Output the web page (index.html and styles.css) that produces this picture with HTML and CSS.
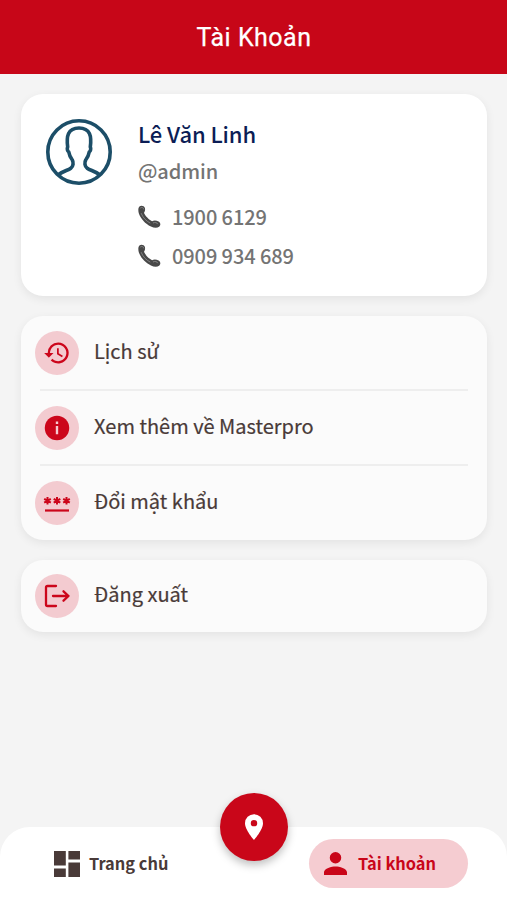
FILE: index.html
```html
<!DOCTYPE html>
<html lang="vi">
<head>
<meta charset="utf-8">
<meta name="viewport" content="width=device-width">
<title>Tài Khoản</title>
<link rel="stylesheet" href="styles.css">
</head>
<body>
<svg class="defs" aria-hidden="true">
  <symbol id="phone" viewBox="0 0 24 24">
    <path fill="#484848" d="M1.500 1.500C3.300 0 6.500.8 7.200 3.200c.5 1.900-.1 3.600-1 4.900 1.300 3.300 5.200 7.300 8.500 8.800 1.800-1 4.500-.9 6.800.3 2.300 1.400 2.300 4.200.5 5.600-1.900 1.400-5.400 1.300-8.500-.3C7.500 19.700 3.100 14.600 1 9.200.1 6.400 0 3 1.500 1.500z"/>
    <path fill="none" stroke="#858585" stroke-width="1" stroke-linecap="round" d="M2.700 3c1.300-1 3-.3 3.300 1.200M3.400 8.900c1.700 4.200 4.800 7.600 9 9.800M16 18.600c1.700-.9 4-.3 4.500 1"/>
  </symbol>
</svg>
<div class="screen">
  <header class="topbar"><h1>Tài Khoản</h1></header>
  <main class="content">
    <section class="card profile">
      <svg class="avatar" viewBox="0 0 66 66" fill="none" stroke="#1c4e68">
        <circle cx="33" cy="33" r="31.200" stroke-width="3.600"/>
        <path stroke-width="3.600" stroke-linejoin="round" d="M12.500 55.500c5.200-3.600 9.500-4.200 12.300-6.300 2.700-2 2.800-6 1.500-8.200-1.900-2.500-3.100-5-3.600-8.200-1.200-.5-1.900-3.300-1-4.800-1.400-10.500 0-19 11.300-19s12.700 8.500 11.300 19c.9 1.500.2 4.300-1 4.800-.5 3.200-1.700 5.700-3.600 8.200-1.300 2.200-1.200 6.200 1.500 8.200 2.800 2.100 7.100 2.700 12.300 6.300"/>
      </svg>
      <div class="info">
        <h2>Lê Văn Linh</h2>
        <p class="handle">@admin</p>
        <p class="phone"><svg><use href="#phone"/></svg><span>1900 6129</span></p>
        <p class="phone"><svg><use href="#phone"/></svg><span>0909 934 689</span></p>
      </div>
    </section>
    <nav class="card menu">
      <a class="row"><span class="badge"><svg class="wide" viewBox="0 0 24 24"><path fill="currentColor" d="M13 3a9 9 0 0 0-9 9H1l3.890 3.890.070.140L9 12H6a7 7 0 1 1 2.060 4.940l-1.420 1.420A9 9 0 1 0 13 3zm-1 5v5l4.280 2.540.72-1.210-3.500-2.080V8H12z"/></svg></span><span class="label">Lịch sử</span></a>
      <a class="row"><span class="badge"><svg viewBox="0 0 24 24"><circle cx="12" cy="12" r="11.300" fill="currentColor"/><path fill="#f6cbd1" d="M10.900 6h2.200v2.200h-2.200zm0 4.200h2.200v7.500h-2.200z"/></svg></span><span class="label">Xem thêm về Masterpro</span></a>
      <a class="row"><span class="badge"><svg class="wide" viewBox="0 0 28 28" fill="none" stroke="currentColor" stroke-width="2"><path d="M4.500 8v7.600M1.200 9.900l6.600 3.800M7.800 9.900l-6.600 3.800M14 8v7.600M10.700 9.900l6.600 3.800M17.300 9.900l-6.600 3.800M23.500 8v7.600M20.200 9.900l6.600 3.800M26.800 9.900l-6.600 3.800"/><path stroke-width="2.200" d="M2 21.500h24"/></svg></span><span class="label">Đổi mật khẩu</span></a>
    </nav>
    <nav class="card menu single">
      <a class="row"><span class="badge"><svg class="wide" viewBox="0 0 28 28" fill="none" stroke="currentColor" stroke-width="2.300" stroke-linecap="round" stroke-linejoin="round"><path d="M13 4H4.500Q3 4 3 5.500v17Q3 24 4.500 24H13M10 14H25.500M20.500 9.300l5 4.700-5 4.700"/></svg></span><span class="label">Đăng xuất</span></a>
    </nav>
  </main>
  <footer class="tabbar">
    <a class="tab home"><svg viewBox="0 0 26 26"><path fill="currentColor" d="M0 0h11.800v14.400H0zM14.400 0H26v8.600H14.400zM0 17.400h11.800V26H0zM14.400 11.600H26V26H14.400z"/></svg><span>Trang chủ</span></a>
    <a class="tab account"><svg viewBox="4 4 16 16"><path fill="currentColor" d="M12 12a4 4 0 1 0 0-8 4 4 0 0 0 0 8zm0 2c-2.670 0-8 1.340-8 4v2h16v-2c0-2.660-5.330-4-8-4z"/></svg><span>Tài khoản</span></a>
    <a class="locate"><svg viewBox="5 2 14 20"><path fill="currentColor" fill-rule="evenodd" d="M12 2a7 7 0 0 0-7 7c0 5.250 7 13 7 13s7-7.750 7-13a7 7 0 0 0-7-7zm0 9.500a2.500 2.500 0 1 1 0-5 2.500 2.500 0 0 1 0 5z"/></svg></a>
  </footer>
</div>
</body>
</html>
```
FILE: styles.css
```css
* { box-sizing: border-box; }
body { margin: 0; font-family: "Noto Sans CJK SC", "Noto Sans", sans-serif; color: #493a38; }
h1, h2, p { margin: 0; }
svg { display: block; flex: none; }
.defs { display: none; }
.screen { height: 900px; display: flex; flex-direction: column; background: #f4f4f4; overflow: hidden; }
.topbar { height: 74px; flex: none; padding: 2px 0 0 1px; display: flex; align-items: center; justify-content: center; background: #c70618; color: #fff; }
h1 { font: 400 25px/28px Roboto, sans-serif; letter-spacing: .5px; -webkit-text-stroke: .25px #fff; }
.content { flex: 1; padding: 20px 20px 0 21px; display: flex; flex-direction: column; gap: 20px; }
.card { flex: none; border-radius: 22px; background: #fbfbfb; box-shadow: 0 3px 10px rgba(0, 0, 0, .07); }
.profile { height: 202px; display: flex; gap: 26px; padding: 25px; background: #fff; }
.avatar { width: 66px; height: 66px; }
.info { color: #747474; font-size: 20px; font-weight: 500; letter-spacing: -.1px; white-space: nowrap; }
h2 { font-size: 22px; line-height: 28px; font-weight: 500; color: #0b1d55; }
.handle { line-height: 30px; margin: 9px 0 11px; }
.phone { height: 39px; line-height: 37px; display: flex; align-items: center; gap: 11px; }
.phone svg { width: 23px; height: 23px; }
.phone span { padding-bottom: 1px; }
.menu { height: 224px; }
.single { height: 72px; }
.row { height: 75px; padding: 15px 14px; display: flex; gap: 15px; background: linear-gradient(#eee, #eee) 19px 0 / calc(100% - 38px) 2px no-repeat; }
.row + .row { padding-top: 16px; }
.row:first-child { height: 73px; background: none; }
.row:nth-child(2) { height: 75px; }
.single .row:first-child { height: 72px; padding-top: 14px; }
.row:nth-child(2) .badge, .row:nth-child(2) .label { margin-top: 1px; }
.row:nth-child(3) .badge, .row:nth-child(3) .label { margin-top: 1px; }
.badge { width: 44px; height: 44px; flex: none; display: flex; align-items: center; justify-content: center; border-radius: 50%; background: #f3cbd0; color: #cc061b; }
.badge svg { width: 26px; height: 26px; }
.badge .wide { width: 28px; height: 28px; }
.label { font-size: 20px; font-weight: 400; line-height: 40px; -webkit-text-stroke: .2px; white-space: nowrap; }
.tabbar { position: relative; height: 73px; flex: none; padding: 12px 39px 0 54px; display: flex; justify-content: space-between; background: #fff; border-radius: 30px 30px 0 0; }
.tab { height: 49px; display: flex; align-items: center; font-size: 16.400px; line-height: 24px; font-weight: 700; white-space: nowrap; }
.tab span { padding-bottom: 2px; }
.home { gap: 9px; }
.home svg { width: 26px; height: 26px; }
.account { width: 159px; padding-left: 15px; gap: 11px; border-radius: 25px; background: #f5ccd1; color: #c90619; }
.account svg { width: 23px; height: 23px; }
.locate { position: absolute; left: 220px; top: -34px; width: 68px; height: 68px; display: flex; align-items: center; justify-content: center; border-radius: 50%; background: #c90619; color: #fff; box-shadow: 0 4px 8px rgba(0, 0, 0, .25); }
.locate svg { width: 18px; height: 26px; }
```
